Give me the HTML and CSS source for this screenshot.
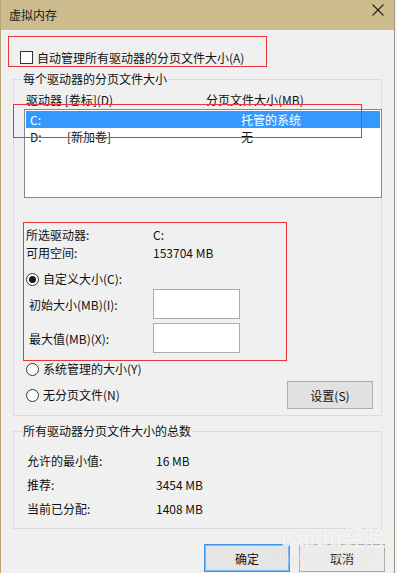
FILE: index.html
```html
<!DOCTYPE html>
<html lang="zh-CN">
<head>
    <meta charset="UTF-8">
    <title>虚拟内存</title>
    <link rel="stylesheet" href="styles.css">
</head>
<body>
    <div class="window">
        <div class="titlebar">
            <span class="title">虚拟内存</span>
            <svg class="close" width="12" height="12" viewBox="0 0 12 12">
                <path d="M0.5 0.5 L11.5 11.5 M11.5 0.5 L0.5 11.5" stroke="#222" stroke-width="1.1" fill="none"/>
            </svg>
        </div>

        <div class="content">
            <label class="check-row">
                <span class="checkbox"></span>
                <span>自动管理所有驱动器的分页文件大小(A)</span>
            </label>

            <div class="group group-drives">
                <span class="legend">每个驱动器的分页文件大小</span>

                <div class="list-header">
                    <span class="col-drive">驱动器 [卷标](D)</span>
                    <span class="col-size">分页文件大小(MB)</span>
                </div>

                <div class="listbox">
                    <div class="list-row selected">
                        <span class="col-letter">C:</span>
                        <span class="col-label"></span>
                        <span class="col-value">托管的系统</span>
                    </div>
                    <div class="list-row">
                        <span class="col-letter">D:</span>
                        <span class="col-label">[新加卷]</span>
                        <span class="col-value">无</span>
                    </div>
                </div>

                <div class="info-row first">
                    <span class="info-key">所选驱动器:</span>
                    <span class="info-val">C:</span>
                </div>
                <div class="info-row">
                    <span class="info-key">可用空间:</span>
                    <span class="info-val">153704 MB</span>
                </div>

                <label class="radio-row custom">
                    <span class="radio checked"></span>
                    <span>自定义大小(C):</span>
                </label>

                <div class="field-row first-field">
                    <span class="field-key">初始大小(MB)(I):</span>
                    <span class="textbox"></span>
                </div>
                <div class="field-row">
                    <span class="field-key">最大值(MB)(X):</span>
                    <span class="textbox"></span>
                </div>

                <label class="radio-row system">
                    <span class="radio"></span>
                    <span>系统管理的大小(Y)</span>
                </label>

                <div class="radio-button-row">
                    <label class="radio-row">
                        <span class="radio"></span>
                        <span>无分页文件(N)</span>
                    </label>
                    <button class="btn btn-set">设置(S)</button>
                </div>
            </div>

            <div class="group group-total">
                <span class="legend">所有驱动器分页文件大小的总数</span>
                <div class="total-row first">
                    <span class="total-key">允许的最小值:</span>
                    <span class="total-val">16 MB</span>
                </div>
                <div class="total-row">
                    <span class="total-key">推荐:</span>
                    <span class="total-val">3454 MB</span>
                </div>
                <div class="total-row">
                    <span class="total-key">当前已分配:</span>
                    <span class="total-val">1408 MB</span>
                </div>
            </div>

            <div class="footer">
                <button class="btn btn-ok">确定</button>
                <button class="btn btn-cancel">取消</button>
            </div>
        </div>

        <!-- annotation boxes drawn over the screenshot -->
        <div class="mark mark-auto"></div>
        <div class="mark mark-row"></div>
        <div class="mark mark-custom"></div>

        <div class="watermark">
            <span class="wm-big">Baidu经验</span>
            <span class="wm-small">jingyan.baidu.com</span>
        </div>
    </div>
</body>
</html>
```

FILE: styles.css
```css
body, html {
    margin: 0;
    padding: 0;
    background-color: #f4f4f4;
    font-family: "Noto Sans CJK SC", "Noto Sans", sans-serif;
    font-size: 12px;
    color: #111;
}

.window {
    position: relative;
    width: 393px;
    height: 573px;
    background-color: #f0f0f0;
    border-left: 1px solid #b9a574;
    border-right: 1px solid #9c9684;
    overflow: hidden;
}

.titlebar {
    height: 30px;
    background-color: #cdbd8e;
    display: flex;
    align-items: center;
    justify-content: space-between;
    padding: 0 10px 0 8px;
}

    .titlebar .title {
        font-size: 12px;
        color: #1a1a1a;
        margin-top: -1px;
    }

    .titlebar .close {
        margin-top: -10px;
    }

.content {
    display: flex;
    flex-direction: column;
}

.check-row {
    display: flex;
    align-items: center;
    height: 16px;
    margin-top: 19px;
    margin-left: 19px;
    gap: 4px;
}

.checkbox {
    width: 11px;
    height: 11px;
    border: 1px solid #333;
    background-color: #fff;
}

.group {
    position: relative;
    margin-left: 12px;
    width: 367px;
    border: 1px solid #dcdcdc;
}

.legend {
    position: absolute;
    top: -9px;
    left: 8px;
    padding: 0 1px;
    background-color: #f0f0f0;
    line-height: 16px;
}

.group-drives {
    margin-top: 14px;
    height: 335px;
}

.list-header {
    display: flex;
    margin-top: 12px;
    margin-left: 12px;
    line-height: 16px;
}

    .list-header .col-drive {
        width: 180px;
    }

.listbox {
    margin-top: 1px;
    margin-left: 10px;
    width: 356px;
    height: 86px;
    border: 1px solid #828790;
    background-color: #fff;
    padding-top: 1px;
    box-sizing: content-box;
}

.list-row {
    display: flex;
    height: 17px;
    line-height: 17px;
    margin: 0 1px;
}

    .list-row.selected {
        background-color: #3399ff;
        color: #fff;
    }

    .list-row .col-letter {
        width: 37px;
        padding-left: 4px;
    }

    .list-row .col-label {
        width: 174px;
    }

.info-row {
    display: flex;
    margin-left: 12px;
    line-height: 16px;
    height: 18px;
}

    .info-row.first {
        margin-top: 29px;
    }

    .info-key {
        width: 127px;
    }

.radio-row {
    display: flex;
    align-items: center;
    gap: 4px;
    line-height: 16px;
}

.radio {
    width: 11px;
    height: 11px;
    border: 1px solid #333;
    border-radius: 50%;
    background-color: #fff;
    display: flex;
    align-items: center;
    justify-content: center;
}

    .radio.checked::after {
        content: "";
        width: 7px;
        height: 7px;
        border-radius: 50%;
        background-color: #1a1a1a;
    }

.radio-row.custom {
    margin-top: 8px;
    margin-left: 12px;
}

.field-row {
    display: flex;
    align-items: center;
    margin-left: 15px;
    height: 30px;
}

    .field-row.first-field {
        margin-top: 2px;
        margin-bottom: 4px;
    }

    .field-key {
        width: 124px;
    }

.textbox {
    width: 85px;
    height: 28px;
    border: 1px solid #acacac;
    background-color: #fff;
}

.radio-row.system {
    margin-top: 8px;
    margin-left: 12px;
}

.radio-button-row {
    display: flex;
    align-items: center;
    justify-content: space-between;
    margin-left: 12px;
    margin-top: 4px;
    width: 347px;
}

.btn {
    font-family: inherit;
    font-size: 12px;
    color: #111;
    width: 86px;
    height: 28px;
    padding: 0;
    background-color: #e1e1e1;
    border: 1px solid #adadad;
}

.group-total {
    margin-top: 15px;
    height: 96px;
}

.total-row {
    display: flex;
    margin-left: 13px;
    line-height: 16px;
    height: 24px;
}

    .total-row.first {
        margin-top: 21px;
    }

    .total-key {
        width: 129px;
    }

.footer {
    display: flex;
    justify-content: flex-end;
    gap: 9px;
    margin-top: 15px;
    margin-right: 9px;
}

.btn-ok {
    border: 1px solid #3c96ee;
    box-shadow: inset 0 0 0 1px #7ab8f5;
    background-color: #e5e5e5;
}

.btn-cancel {
    background-color: #ececec;
}

.mark {
    position: absolute;
    border: 1px solid #e8353a;
    pointer-events: none;
}

.mark-auto {
    left: 7px;
    top: 36px;
    width: 257px;
    height: 29px;
}

.mark-row {
    left: 12px;
    top: 104px;
    width: 347px;
    height: 32px;
}

.mark-custom {
    left: 22px;
    top: 222px;
    width: 262px;
    height: 137px;
}

.watermark {
    position: absolute;
    left: 280px;
    top: 528px;
    display: flex;
    flex-direction: column;
    color: rgba(255, 255, 255, 0.75);
    text-shadow: 0 0 1px rgba(150, 150, 150, 0.35);
    pointer-events: none;
}

    .watermark .wm-big {
        font-family: "Liberation Sans", sans-serif;
        font-size: 22px;
        font-weight: bold;
        line-height: 22px;
    }

    .watermark .wm-small {
        font-size: 11px;
        line-height: 12px;
        margin-left: -5px;
    }
```
